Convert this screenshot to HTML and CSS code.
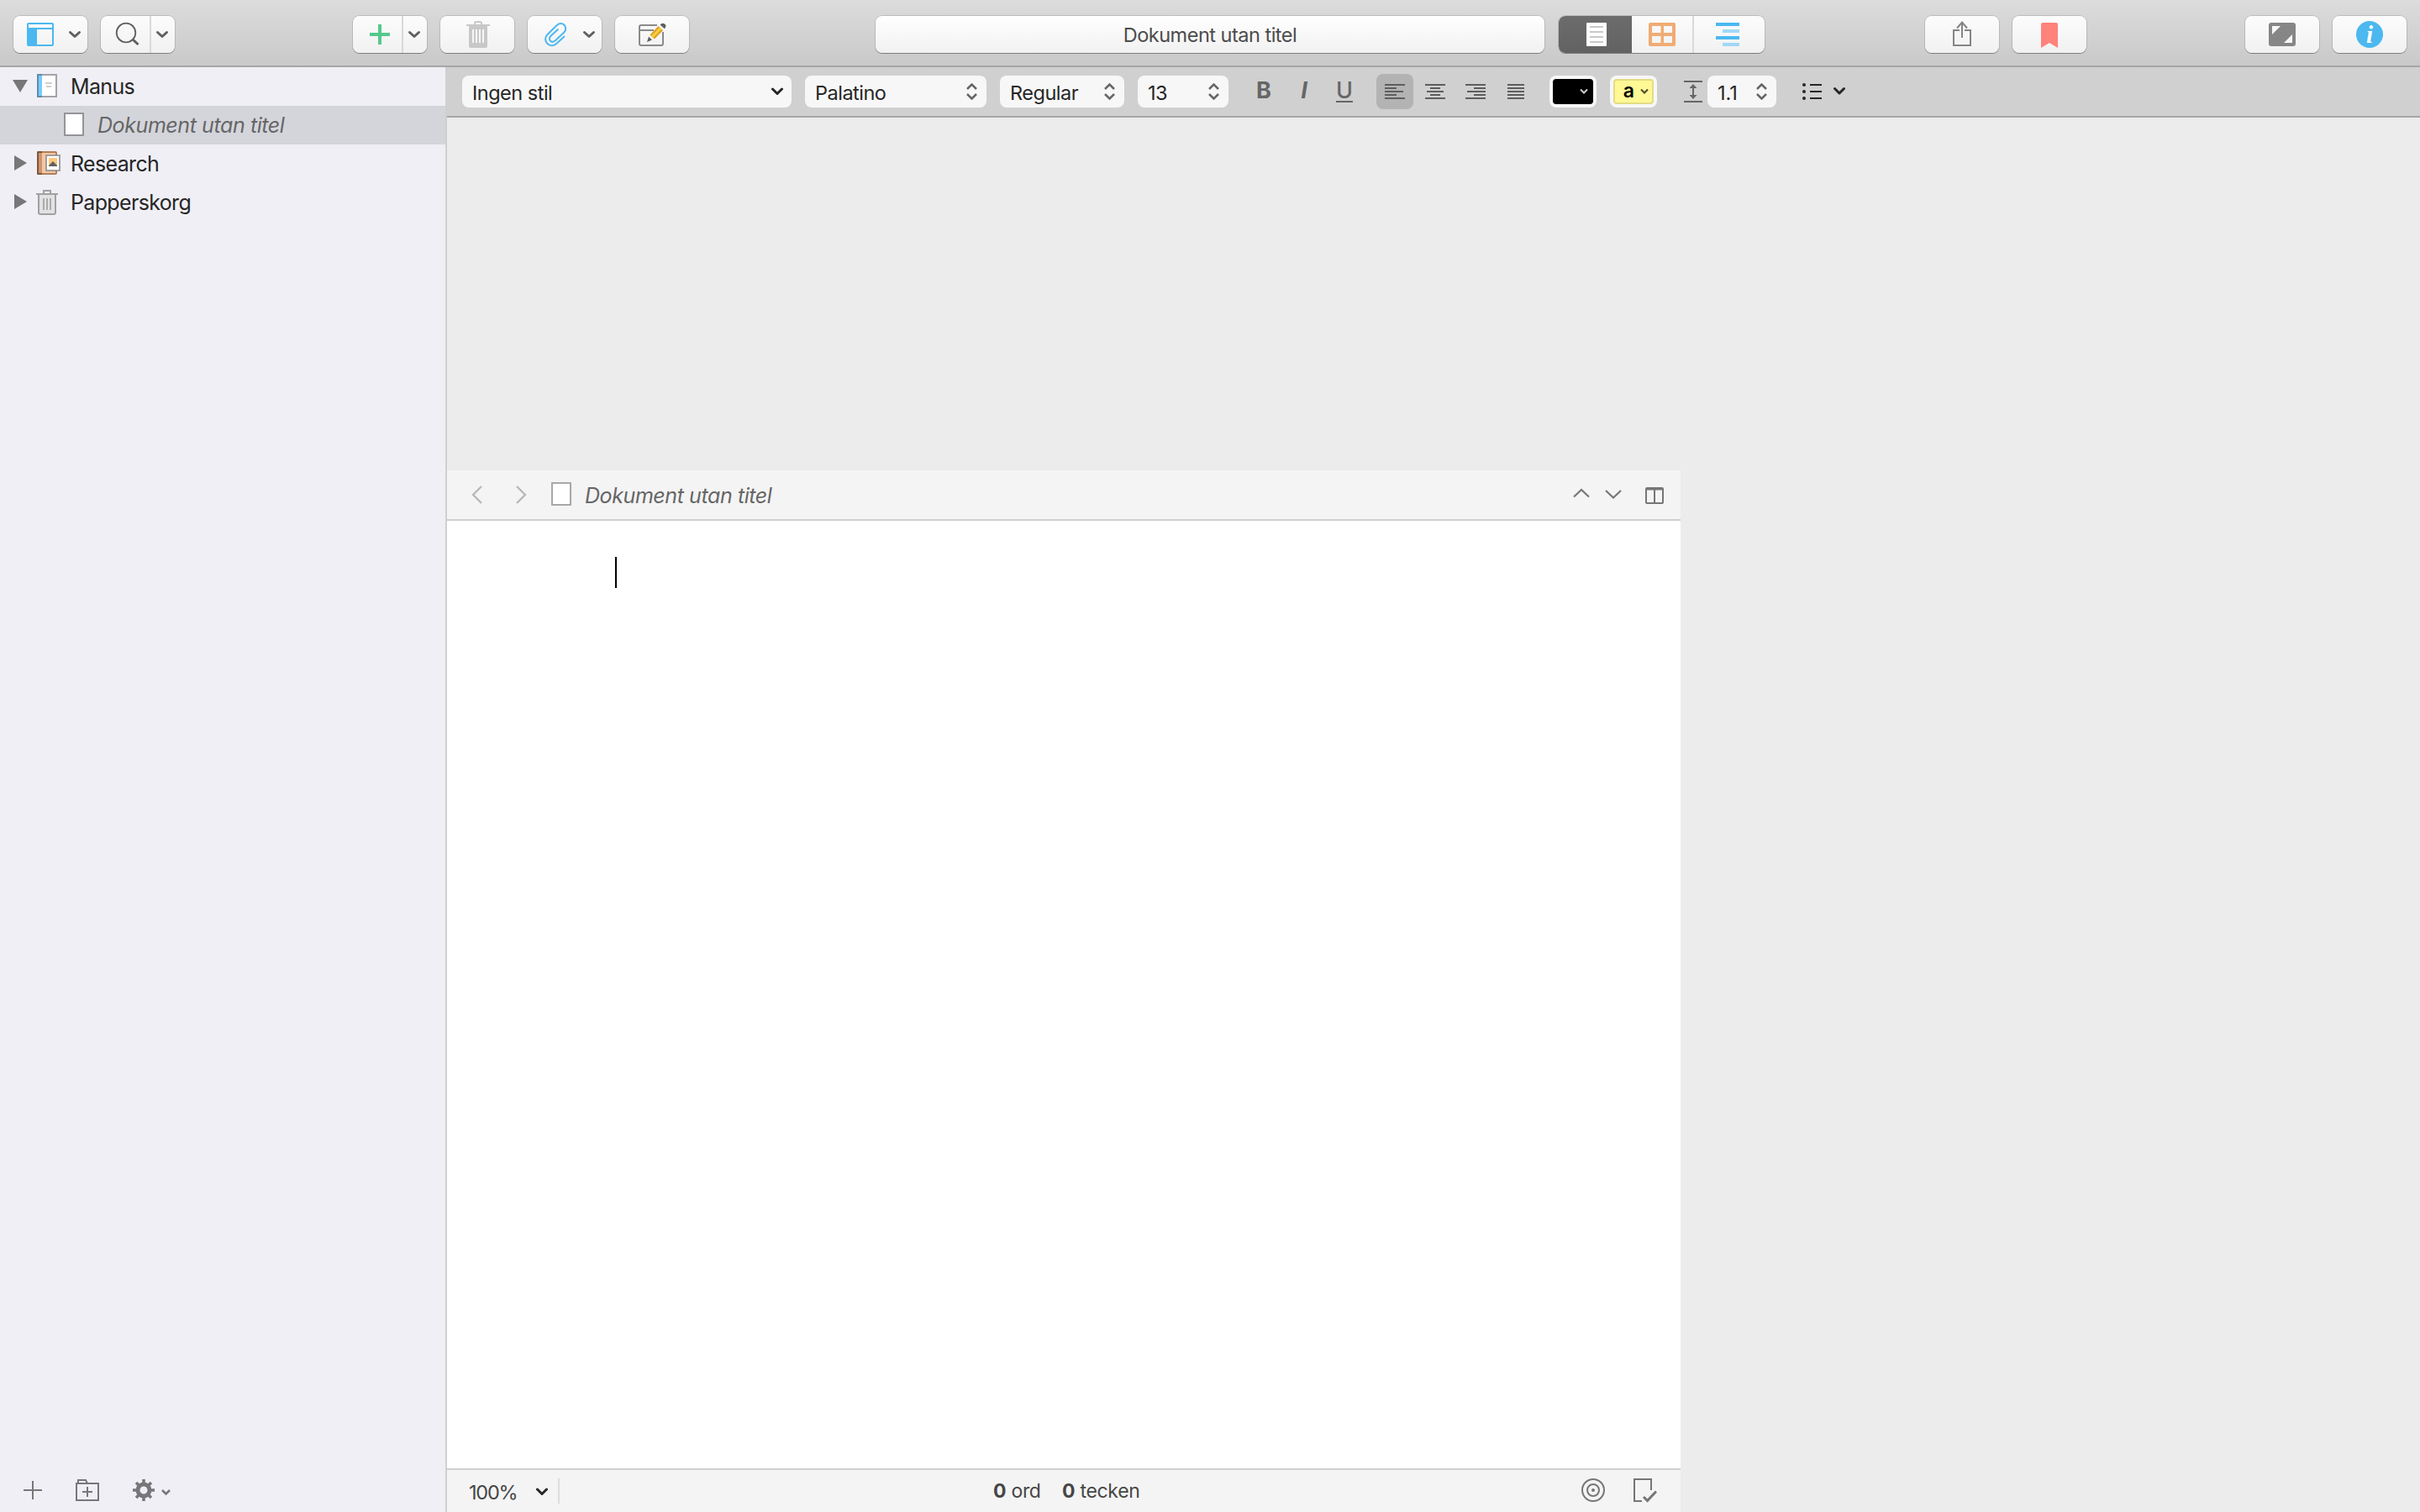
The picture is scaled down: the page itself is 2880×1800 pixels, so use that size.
FILE: index.html
```html
<!DOCTYPE html>
<html lang="sv">

<head>
  <title>Dokument utan titel</title>
  <meta charset="UTF-8">
  <link rel="stylesheet" href="styles.css">
</head>

<body>
  <div class="toolbar">
    <div class="btn">
      <svg width="88" height="44">
        <path class="blue" d="M18 8h28a2 2 0 0 1 2 2v24a2 2 0 0 1-2 2H18a2 2 0 0 1-2-2V10a2 2 0 0 1 2-2zM18 10v4h28v-4zM28 16v18h18V16z" fill-rule="evenodd"/>
        <path class="chev" d="M67.5 19.5L73 24.5L78.5 19.5"/>
      </svg>
    </div>
    <div class="btn">
      <svg width="88" height="44">
        <circle cx="30" cy="20" r="11.3" fill="none" stroke="#5f5f5f" stroke-width="1.8"/>
        <path d="M38 28L44.5 34" stroke="#5f5f5f" stroke-width="3"/>
        <path d="M59 0v44" stroke="#d9d9d9" stroke-width="2"/>
        <path class="chev" d="M67.5 19.5L73 24.5L78.5 19.5"/>
      </svg>
    </div>
    <div class="btn btn-add">
      <svg width="88" height="44">
        <path d="M32 10v24M20 22h24" stroke="#54c98b" stroke-width="4"/>
        <path d="M59 0v44" stroke="#d9d9d9" stroke-width="2"/>
        <path class="chev" d="M67.5 19.5L73 24.5L78.5 19.5"/>
      </svg>
    </div>
    <div class="btn">
      <svg width="88" height="44">
        <path d="M41 11V9q0-2 2-2h4q2 0 2 2v2M31 11h28" fill="none" stroke="#c8c8c8" stroke-width="2"/>
        <path d="M34 11h22v25q0 2-2 2H36q-2 0-2-2zM38 16v16h2V16zM42 16v16h2V16zM46 16v16h2V16zM50 16v16h2V16z" fill="#c8c8c8" fill-rule="evenodd"/>
      </svg>
    </div>
    <div class="btn">
      <svg width="88" height="44">
        <path d="M44 24L34.5 32.7C31 35.8 26.5 36 23.5 33S20 25.500 23.300 22.200L34.500 11.300C37 8.500 41 8.200 43.500 10.700S45.700 17 43.300 19.500L33.200 29C31 31 28.500 31.200 27 29.700S25.500 25.700 27.500 23.800L36.500 15.500" fill="none" stroke="#4cb8f0" stroke-width="2"/>
        <path class="chev" d="M67.5 19.5L73 24.5L78.5 19.5"/>
      </svg>
    </div>
    <div class="btn">
      <svg width="88" height="44">
        <path d="M50 11H31q-2 0-2 2v20q0 2 2 2h24q2 0 2-2V19M29 17h17" fill="none" stroke="#8a8a8a" stroke-width="2"/>
        <path d="M38 31L40 24.500L44 28.500z" fill="#5f5f5f"/>
        <path d="M41.500 22.500L51.500 12L57 17.200L46.800 27.500z" fill="#e3a11f"/>
        <path d="M44 25L54.200 14.700" stroke="#f6cf45" stroke-width="3"/>
        <path d="M53.500 10.500Q56 7.500 59 9.500T58.800 15.200z" fill="#5f5f5f"/>
      </svg>
    </div>

    <div class="title-field">Dokument utan titel</div>

    <div class="segments">
      <div class="seg seg-doc">
        <svg width="87" height="44">
          <rect x="33" y="8" width="24" height="28" rx="1" fill="#fff"/>
          <path d="M37 13h16M37 19h16M37 25h16M37 31h16" stroke="#c8c8c8" stroke-width="2"/>
        </svg>
      </div>
      <div class="seg">
        <svg width="72" height="44">
          <path d="M22 8h28a2 2 0 0 1 2 2v24a2 2 0 0 1-2 2H22a2 2 0 0 1-2-2V10a2 2 0 0 1 2-2zM24 12v8h10.500v-8zM38 12v8h10v-8zM24 24v8h10.500v-8zM38 24v8h10v-8z" fill="#f0ac74" fill-rule="evenodd"/>
        </svg>
      </div>
      <div class="seg seg-outline">
        <svg width="84" height="44">
          <path d="M26 10h28M26 26h28" stroke="#4cb8f0" stroke-width="4"/>
          <path d="M34 18h20M34 34h20" stroke="#a1d8f7" stroke-width="4"/>
        </svg>
      </div>
    </div>

    <div class="btn btn-share">
      <svg width="88" height="44">
        <path d="M41 17h-7v18h20V17h-7M44 26V8M38 14.500L44 7.500L50 14.500" fill="none" stroke="#858585" stroke-width="2"/>
      </svg>
    </div>
    <div class="btn">
      <svg width="88" height="44">
        <path d="M36 8h16q2 0 2 2v28l-10-6l-10 6V10q0-2 2-2z" fill="#ff827b"/>
      </svg>
    </div>
    <div class="btn btn-full">
      <svg width="88" height="44">
        <rect x="28" y="8" width="32" height="28" rx="3" fill="#868686"/>
        <path d="M32 12h10l-10 10zM56 32H46l10-10z" fill="#f8f8f8"/>
      </svg>
    </div>
    <div class="btn">
      <svg width="88" height="44">
        <circle cx="44" cy="22" r="16" fill="#4cb8f0"/>
        <text class="info-i" x="44" y="32" text-anchor="middle">i</text>
      </svg>
    </div>
  </div>

  <div class="main">
    <div class="sidebar">
      <div class="row">
        <svg width="84" height="46">
          <path d="M15 15h18l-9 15z" fill="#77777a"/>
          <rect x="45" y="9" width="22" height="26" fill="#fff" stroke="#a3a3a8" stroke-width="2"/>
          <path d="M46 10h4v24h-4z" fill="#76cbff"/>
          <path d="M44 8h6v2h-4v24h4v2h-6z" fill="#648ba9"/>
          <path d="M54 19h8M55 23h6" stroke="#cfcfcf" stroke-width="2"/>
        </svg>
        <span>Manus</span>
      </div>
      <div class="row row-selected">
        <svg width="116" height="46">
          <rect x="77" y="9" width="22" height="26" fill="#fff" stroke="#949499" stroke-width="2"/>
        </svg>
        <span class="untitled">Dokument utan titel</span>
      </div>
      <div class="row">
        <svg width="84" height="46">
          <path d="M17 13v18l15-9z" fill="#77777a"/>
          <rect x="45" y="9" width="22" height="26" rx="1" fill="#f5c7a1" stroke="#b17f5b" stroke-width="2"/>
          <path d="M46 10h4v24h-4z" fill="#cc9470"/>
          <path d="M50 8h-5l-1 1v26l1 1h5v-2h-4V10h4z" fill="#7e573c"/>
          <rect x="55" y="13" width="16" height="18" fill="#fff" stroke="#8d8b8b" stroke-width="2" stroke-opacity=".8"/>
          <path d="M58 16h10v10H58z" fill="#ffc67e"/>
          <path d="M58 26v-1l5-5l5 5v1z" fill="#606060"/>
        </svg>
        <span>Research</span>
      </div>
      <div class="row">
        <svg width="84" height="46">
          <path d="M17 13v18l15-9z" fill="#77777a"/>
          <path d="M46 13h20v22q0 2-2 2H48q-2 0-2-2z" fill="#e2e2e2" stroke="#a1a1a4" stroke-width="2"/>
          <path d="M43 13h26M52 12V9h8v3" fill="none" stroke="#a1a1a4" stroke-width="2"/>
          <path d="M52 18v14M56 18v14M60 18v14" stroke="#acacac" stroke-width="2"/>
        </svg>
        <span>Papperskorg</span>
      </div>

      <div class="side-footer">
        <svg width="210" height="50">
          <g fill="none" stroke="#77777a" stroke-width="2">
            <path d="M39 13v22M28 24h22"/>
            <path d="M91 16h26v20H91zM93 16v-4h9l2 4M104 20v12M98 26h12"/>
          </g>
          <circle cx="171" cy="24" r="7" fill="none" stroke="#77777a" stroke-width="5"/>
          <path d="M171 11v5M171 32v5M158 24h5M179 24h5M162 15l3 3M177 30l3 3M162 33l3-3M177 18l3-3" stroke="#77777a" stroke-width="3.500"/>
          <path d="M193 24L197.500 28.500L202 24" fill="none" stroke="#77777a" stroke-width="2.500"/>
        </svg>
      </div>
    </div>

    <div class="content">
      <div class="format-bar">
        <div class="select select-style">
          <span>Ingen stil</span>
          <svg width="14" height="10"><path class="chev dark" d="M1.500 2L7 7.500L12.500 2"/></svg>
        </div>
        <div class="select select-font">
          <span>Palatino</span>
          <svg width="13" height="20"><path class="step" d="M1 7L6.500 1.500L12 7M1 13L6.500 18.500L12 13"/></svg>
        </div>
        <div class="select select-face">
          <span>Regular</span>
          <svg width="13" height="20"><path class="step" d="M1 7L6.500 1.500L12 7M1 13L6.500 18.500L12 13"/></svg>
        </div>
        <div class="select select-size">
          <span>13</span>
          <svg width="13" height="20"><path class="step" d="M1 7L6.500 1.500L12 7M1 13L6.500 18.500L12 13"/></svg>
        </div>
        <div class="fmt fmt-b">B</div>
        <div class="fmt fmt-i">I</div>
        <div class="fmt fmt-u">U</div>
        <div class="align align-on">
          <svg width="24" height="18"><path d="M0 1h24M0 5h14M0 9h22M0 13h14M0 17h24"/></svg>
        </div>
        <div class="align">
          <svg width="24" height="18"><path d="M0 1h24M6 5h12M2 9h20M6 13h12M0 17h24"/></svg>
        </div>
        <div class="align">
          <svg width="24" height="18"><path d="M0 1h24M10 5h14M2 9h22M10 13h14M0 17h24"/></svg>
        </div>
        <div class="align">
          <svg width="20" height="18"><path d="M0 1h20M0 5h20M0 9h20M0 13h20M0 17h20"/></svg>
        </div>
        <div class="well">
          <div class="well-in well-black">
            <svg width="10" height="8"><path d="M1 1.500L5 5.500L9 1.500"/></svg>
          </div>
        </div>
        <div class="well well-mark">
          <div class="well-in well-yellow">
            <span>a</span>
            <svg width="10" height="8"><path d="M1 1.500L5 5.500L9 1.500"/></svg>
          </div>
        </div>
        <svg class="spacing" width="22" height="26">
          <path d="M0 1h22M0 25h22M11 6v14" stroke="#666" stroke-width="2"/>
          <path d="M6.500 9L11 4l4.500 5zM6.500 17l4.500 5l4.500-5z" fill="#666"/>
        </svg>
        <div class="select select-line">
          <span>1.1</span>
          <svg width="13" height="20"><path class="step" d="M1 7L6.500 1.500L12 7M1 13L6.500 18.500L12 13"/></svg>
        </div>
        <svg class="list" width="52" height="22">
          <g fill="#262626"><circle cx="2" cy="3" r="2"/><circle cx="2" cy="11" r="2"/><circle cx="2" cy="19" r="2"/></g>
          <path d="M9 3h14M9 11h14M9 19h14" stroke="#262626" stroke-width="2"/>
          <path class="chev dark" d="M38.500 7.500L44 13L49.500 7.500"/>
        </svg>
      </div>

      <div class="editor">
        <div class="editor-header">
          <svg width="148" height="58">
            <path d="M41 19L31 29L41 39M83 19L93 29L83 39" fill="none" stroke="#b6b6b6" stroke-width="2.200"/>
            <rect x="125" y="15" width="22" height="26" fill="#fff" stroke="#a8a8a8" stroke-width="2"/>
          </svg>
          <span class="untitled">Dokument utan titel</span>
          <svg class="header-right" width="108" height="58">
            <g fill="none" stroke="#767676" stroke-width="2.200">
              <path d="M1 31.500L10 23L19 31.500M39 24L48 32.500L57 24"/>
              <rect x="87" y="21" width="20" height="18" rx="1" stroke-width="2"/>
              <path d="M97 22v17M87 22.500h20" stroke-width="2"/>
            </g>
          </svg>
        </div>
        <div class="page">
          <div class="caret"></div>
        </div>
        <div class="editor-footer">
          <div class="zoom">
            <span>100%</span>
            <svg width="14" height="10"><path class="chev dark" d="M1.500 2L7 7.500L12.500 2"/></svg>
          </div>
          <div class="count"><b>0</b> ord</div>
          <div class="count count-chars"><b>0</b> tecken</div>
          <svg class="footer-right" width="90" height="50">
            <g fill="none" stroke="#767676" stroke-width="2">
              <circle cx="14" cy="24" r="13"/>
              <circle cx="14" cy="24" r="7"/>
              <path d="M72 37h-9V11h20v13"/>
              <path d="M74 32l4.500 4.500L89 25.500" stroke-width="3"/>
            </g>
            <circle cx="14" cy="24" r="2" fill="#767676"/>
          </svg>
        </div>
      </div>
    </div>
  </div>
</body>

</html>
```
FILE: styles.css
```css
body {
  margin: 0;
  width: 2880px;
  height: 1800px;
  overflow: hidden;
  display: flex;
  flex-direction: column;
  background-color: #ececec;
  color: #262626;
  font-family: Inter, "Liberation Sans", sans-serif;
  font-size: 25px;
}

svg {
  display: block;
  flex: none;
}

/* top toolbar */
.toolbar {
  box-sizing: border-box;
  height: 80px;
  flex: none;
  display: flex;
  align-items: flex-start;
  gap: 16px;
  padding: 19px 16px 0;
  background: linear-gradient(#dcdcdc, #c9c9c9);
  border-bottom: 2px solid #a6a6a6;
}

.btn,
.title-field,
.segments {
  flex: none;
  height: 44px;
  border-radius: 8px;
  background: linear-gradient(#fcfcfc, #f1f1f1);
  box-shadow: 0 0 0 1px rgba(0, 0, 0, 0.12), 0 1px 0 rgba(0, 0, 0, 0.3);
}

.btn {
  width: 88px;
}

.btn-add {
  margin-left: 196px;
}

.btn-share {
  margin-left: 175px;
}

.btn-full {
  margin-left: 173px;
}

.title-field {
  width: 796px;
  margin-left: 206px;
  background: linear-gradient(#fff, #f1f1f1);
  color: #4c4c4c;
  font-size: 23.5px;
  letter-spacing: -0.5px;
  line-height: 45px;
  text-align: center;
}

.segments {
  display: flex;
  width: 245px;
  margin-left: 1px;
  overflow: hidden;
}

.seg-doc {
  background: linear-gradient(#6c6c6c, #626262);
}

.seg-outline {
  border-left: 2px solid #d9d9d9;
}

.blue {
  fill: #4cb8f0;
}

.chev {
  fill: none;
  stroke: #5f5f5f;
  stroke-width: 3;
  stroke-linecap: round;
  stroke-linejoin: round;
}

.chev.dark {
  stroke: #262626;
}

.step {
  fill: none;
  stroke: #666;
  stroke-width: 2.5;
}

.info-i {
  fill: #fff;
  font: italic bold 29px "Liberation Serif", serif;
}

.main {
  flex: 1;
  display: flex;
  min-height: 0;
}

/* sidebar */
.sidebar {
  width: 530px;
  flex: none;
  display: flex;
  flex-direction: column;
  background-color: #f0eff5;
  border-right: 2px solid #cfcfcf;
}

.row {
  height: 46px;
  display: flex;
  align-items: center;
}

.row span {
  line-height: 46px;
  letter-spacing: -0.65px;
}

.row-selected {
  background-color: #d4d5db;
}

.row .untitled,
.untitled {
  color: #666;
  font-style: italic;
  letter-spacing: -0.42px;
}

.side-footer {
  margin-top: auto;
}

/* format bar */
.content {
  flex: 1;
  display: flex;
  flex-direction: column;
}

.format-bar {
  box-sizing: border-box;
  height: 60px;
  display: flex;
  align-items: center;
  padding-left: 18px;
  background-color: #d0d0d0;
  border-bottom: 2px solid #a6a6a6;
}

.select {
  box-sizing: border-box;
  height: 38px;
  margin-right: 16px;
  padding: 0 11px 0 12px;
  display: flex;
  align-items: center;
  justify-content: space-between;
  background-color: #f7f7f7;
  border-radius: 8px;
  font-size: 23.5px;
  letter-spacing: -0.5px;
}

.select span {
  padding-top: 2px;
}

.select-style {
  width: 392px;
  padding-right: 10px;
}

.select-font {
  width: 216px;
}

.select-face {
  width: 148px;
}

.select-size {
  width: 108px;
}

.fmt {
  width: 48px;
  margin-bottom: 2px;
  text-align: center;
  font-size: 27px;
  line-height: 32px;
  color: #666;
}

.fmt-b {
  margin-left: 2px;
  font-weight: 700;
}

.fmt-i {
  font-weight: 700;
  font-style: italic;
}

.fmt-u {
  text-decoration: underline;
  text-decoration-thickness: 2px;
  text-underline-offset: 3px;
  font-weight: 500;
  margin-right: 14px;
}

.align {
  width: 44px;
  height: 42px;
  margin-right: 4px;
  border-radius: 8px;
  display: flex;
  align-items: center;
  justify-content: center;
}

.align-on {
  background-color: #b3b3b3;
}

.align path {
  stroke: #5e5e5e;
  stroke-width: 2;
}

.well {
  box-sizing: border-box;
  width: 56px;
  height: 38px;
  margin-left: 14px;
  padding: 4px;
  background-color: #f7f7f7;
  border-radius: 8px;
}

.well-mark {
  margin-left: 16px;
}

.well-in {
  box-sizing: border-box;
  height: 30px;
  display: flex;
  align-items: center;
  justify-content: flex-end;
  padding-right: 6px;
  border-radius: 4px;
}

.well-in path {
  fill: none;
  stroke: #ccc;
  stroke-width: 2;
}

.well-black {
  background-color: #000;
}

.well-yellow {
  background-color: #fff894;
  border: 2px solid #e3dc84;
  padding-right: 4px;
  color: #000;
  font-size: 23px;
  font-weight: 600;
}

.well-yellow span {
  margin: 0 7px 2px 0;
}

.well-yellow path {
  stroke: #4c4a2c;
}

.spacing {
  margin-left: 32px;
}

.select-line {
  width: 82px;
  margin: 0 31px 0 6px;
  letter-spacing: 0;
}

/* editor pane */
.editor {
  width: 1468px;
  height: 1240px;
  margin-top: auto;
  display: flex;
  flex-direction: column;
  background-color: #fff;
}

.editor-header {
  height: 58px;
  display: flex;
  align-items: center;
  background-color: #f4f4f4;
  border-bottom: 2px solid #cfcfcf;
}

.editor-header span {
  margin-left: 16px;
  padding-top: 2px;
}

.header-right {
  margin: 0 20px 0 auto;
}

.page {
  flex: 1;
  padding: 43px 0 0 200px;
}

.caret {
  width: 2px;
  height: 37px;
  background-color: #000;
}

.editor-footer {
  height: 50px;
  display: flex;
  align-items: center;
  background-color: #f4f4f4;
  border-top: 2px solid #cfcfcf;
  color: #464646;
  font-size: 23.5px;
}

.zoom {
  box-sizing: border-box;
  width: 134px;
  height: 30px;
  padding: 2px 12px 0 26px;
  display: flex;
  align-items: center;
  justify-content: space-between;
  border-right: 2px solid #dcdcdc;
  letter-spacing: -1.2px;
}

.count {
  margin-left: 516px;
  width: 82px;
  font-size: 23px;
  letter-spacing: -0.3px;
  white-space: nowrap;
}

.count-chars {
  margin-left: 0;
}

.footer-right {
  margin: 0 28px 0 auto;
}
```
